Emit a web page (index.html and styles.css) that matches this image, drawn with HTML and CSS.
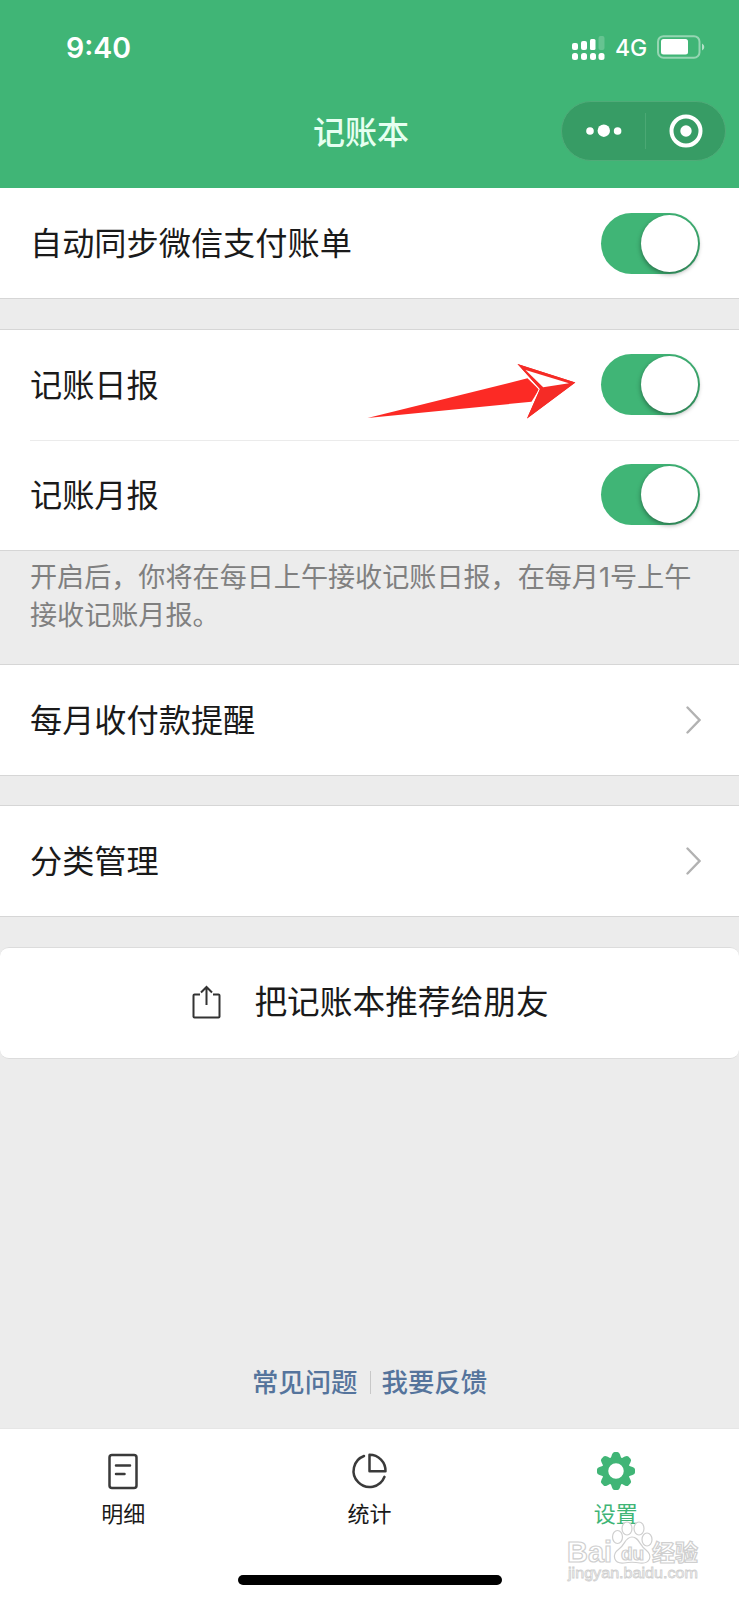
FILE: index.html
```html
<!DOCTYPE html>
<html lang="zh-CN">
<head>
    <meta charset="UTF-8">
    <meta name="viewport" content="width=device-width, initial-scale=1.0">
    <title>记账本</title>
    <link rel="stylesheet" href="styles.css">
</head>
<body>
    <!-- Header -->
    <header class="header">
        <div class="status-bar">
            <span class="time">9:40</span>
            <div class="status-right">
                <svg class="signal" width="33" height="25" viewBox="0 0 33 25" fill="#fff">
                    <rect x="0" y="7" width="6" height="7" rx="2"/>
                    <rect x="9" y="5" width="6" height="9" rx="2"/>
                    <rect x="18" y="3" width="5.500" height="11" rx="1.500"/>
                    <rect x="26.500" y="0" width="6" height="14" rx="2" opacity="0.2"/>
                    <rect x="0" y="17" width="6" height="7" rx="2.500"/>
                    <rect x="9" y="17" width="6" height="7" rx="2.500"/>
                    <rect x="18" y="17" width="6" height="7" rx="2.500"/>
                    <rect x="26.500" y="17" width="6" height="7" rx="2.500"/>
                </svg>
                <span class="network">4G</span>
                <svg class="battery" width="48" height="24" viewBox="0 0 48 24">
                    <rect x="1" y="1.200" width="41.500" height="21.500" rx="5.500" fill="none" stroke="#fff" stroke-opacity="0.45" stroke-width="2"/>
                    <rect x="4" y="4" width="27" height="15.500" rx="2.500" fill="#fff"/>
                    <path d="M45 8.500q2.300 1 2.300 3.500t-2.300 3.500z" fill="#fff" fill-opacity="0.6"/>
                </svg>
            </div>
        </div>
        <div class="nav">
            <h1>记账本</h1>
            <div class="capsule">
                <svg width="36" height="14" viewBox="0 0 36 14" fill="#fff">
                    <circle cx="4" cy="7" r="3.800"/>
                    <circle cx="17.800" cy="6.700" r="6.200"/>
                    <circle cx="31.600" cy="7" r="3.800"/>
                </svg>
                <span class="capsule-line"></span>
                <svg width="34" height="34" viewBox="0 0 34 34">
                    <circle cx="17" cy="17" r="14.500" fill="none" stroke="#fff" stroke-width="4"/>
                    <circle cx="17" cy="17" r="5.700" fill="#fff"/>
                </svg>
            </div>
        </div>
    </header>

    <!-- Settings list -->
    <main class="content">
        <section class="group first">
            <div class="row">
                <span>自动同步微信支付账单</span>
                <span class="switch"></span>
            </div>
        </section>

        <section class="group reports">
            <div class="row">
                <span>记账日报</span>
                <svg class="arrow" width="210" height="58" viewBox="0 0 210 58">
                    <path d="M0.500 55L160.500 15.300L172 26.500L164.500 38.800z" fill="#fc2a25"/>
                    <path d="M150.500 1L208.300 19.400L160 55.500L173 26z" fill="#f52b26" stroke="#fff" stroke-width="2.200" paint-order="stroke"/>
                    <path d="M150.500 1L208.300 19.400L160 55.500L173 26z" fill="#f52b26"/>
                    <path d="M158.500 7L202 20.200L176.200 24.300z" fill="#fff"/>
                </svg>
                <span class="switch"></span>
            </div>
            <div class="row divided">
                <span>记账月报</span>
                <span class="switch"></span>
            </div>
        </section>
        <p class="hint">开启后，你将在每日上午接收记账日报，在每月1号上午<br>接收记账月报。</p>

        <section class="group reminder">
            <div class="row">
                <span>每月收付款提醒</span>
                <svg class="chevron" width="15" height="28" viewBox="0 0 15 28">
                    <path d="M1.500 1.500L13.500 14L1.500 26.500"/>
                </svg>
            </div>
        </section>

        <section class="group">
            <div class="row">
                <span>分类管理</span>
                <svg class="chevron" width="15" height="28" viewBox="0 0 15 28">
                    <path d="M1.500 1.500L13.500 14L1.500 26.500"/>
                </svg>
            </div>
        </section>

        <button class="share">
            <svg width="29" height="34" viewBox="0 0 29 34" fill="none" stroke="#333" stroke-width="2">
                <path d="M8 9.500H2.500Q1.500 9.500 1.500 10.500V31.500Q1.500 32.500 2.500 32.500H26.500Q27.500 32.500 27.500 31.500V10.500Q27.500 9.500 26.500 9.500H21"/>
                <path d="M14.500 20V2M9 7.500L14.500 2L20 7.500"/>
            </svg>
            <span>把记账本推荐给朋友</span>
        </button>

        <div class="links">
            <a href="#">常见问题</a>
            <a href="#">我要反馈</a>
        </div>
    </main>

    <!-- Tab bar -->
    <nav class="tabs">
        <a class="tab" href="#">
            <svg width="40" height="40" viewBox="0 0 40 40" fill="none" stroke="#3a3a3a" stroke-width="2.500" stroke-linecap="round">
                <rect x="6.500" y="4" width="27" height="33" rx="2.500"/>
                <path d="M13 14.500H27M13 23H21.500"/>
            </svg>
            <span>明细</span>
        </a>
        <a class="tab" href="#">
            <svg width="40" height="40" viewBox="0 0 40 40" fill="none" stroke="#3a3a3a" stroke-width="2.500" stroke-linecap="round" stroke-linejoin="round">
                <path d="M15 5A16 16 0 1 0 35.500 25.800"/>
                <path d="M20.500 3.800V20.300H36.500A16 16 0 0 0 20.500 3.800z"/>
            </svg>
            <span>统计</span>
        </a>
        <a class="tab active" href="#">
            <svg width="40" height="40" viewBox="0 0 40 40">
                <circle cx="20" cy="20" r="11" fill="none" stroke="#40b576" stroke-width="6.500"/>
                <g fill="#40b576">
                    <path id="teeth" d="M14.500 8L16 3.500Q16.800 1 18.500 1H21.500Q23.200 1 24 3.500L25.500 8zM14.500 32L16 36.500Q16.800 39 18.500 39H21.500Q23.200 39 24 36.500L25.500 32z"/>
                    <use href="#teeth" transform="rotate(45 20 20)"/>
                    <use href="#teeth" transform="rotate(90 20 20)"/>
                    <use href="#teeth" transform="rotate(135 20 20)"/>
                </g>
            </svg>
            <span>设置</span>
        </a>
    </nav>
    <div class="home-indicator"></div>

    <!-- Watermark -->
    <svg class="watermark" width="140" height="66" viewBox="0 0 140 66">
        <g fill="#fff" stroke="#cfcfcf" stroke-width="1.200">
            <text class="wm-latin" x="1" y="42" textLength="45" lengthAdjust="spacingAndGlyphs">Bai</text>
            <ellipse cx="61" cy="8.500" rx="5" ry="6.500"/>
            <ellipse cx="73" cy="8.500" rx="5" ry="6.500"/>
            <ellipse cx="51.500" cy="17" rx="5" ry="6.500"/>
            <ellipse cx="81" cy="19.500" rx="5" ry="6.500"/>
            <path d="M66 17C59 17 59 25 53 29C45 35 48 44 58 43Q66 41.500 74 43C84 44 87 36 80 30C73 25 73 17 66 17z"/>
            <text class="wm-du" x="55" y="40">du</text>
            <text class="wm-cn" x="86" y="41">经验</text>
            <text class="wm-url" x="2" y="58" textLength="130" lengthAdjust="spacingAndGlyphs">jingyan.baidu.com</text>
        </g>
    </svg>
</body>
</html>
```
FILE: styles.css
```css
* {
    box-sizing: border-box;
}
body {
    margin: 0;
    height: 1600px;
    position: relative;
    display: flex;
    flex-direction: column;
    overflow: hidden;
    font-family: Inter, "Noto Sans CJK SC", sans-serif;
    color: #1a1a1a;
    background-color: #ececec;
}
a {
    text-decoration: none;
}
svg {
    display: block;
    flex-shrink: 0;
}

/* Header */
.header {
    height: 188px;
    background-color: #40b576;
    color: #fff;
}
.status-bar {
    height: 94px;
    display: flex;
    align-items: center;
    justify-content: space-between;
    padding: 0 34px 0 66px;
}
.time {
    padding-top: 1px;
    font-size: 28.5px;
    font-weight: 600;
    line-height: 40px;
}
.status-right {
    display: flex;
    align-items: center;
}
.signal {
    margin-top: 2px;
}
.network {
    margin: 1px 10px 0 10px;
    width: 32px;
    font-size: 23px;
    font-weight: 500;
    line-height: 30px;
}
.nav {
    height: 73px;
    display: flex;
    align-items: center;
    justify-content: space-between;
    padding: 0 13px 0 313px;
}
.nav h1 {
    margin: 0;
    padding-top: 4px;
    font-size: 32px;
    font-weight: 500;
    line-height: 44px;
    color: #e6fff0;
}
.capsule {
    width: 165px;
    height: 60px;
    display: flex;
    align-items: center;
    justify-content: space-between;
    padding: 0 22px 0 24px;
    border: 1px solid #4fab78;
    border-radius: 30px;
    background-color: #379c65;
}
.capsule-line {
    width: 1px;
    height: 36px;
    background-color: #4ba874;
}

/* Settings list */
.content {
    flex: 1;
    display: flex;
    flex-direction: column;
}
.group {
    margin-bottom: 30px;
    background-color: #fff;
    border-top: 1px solid #d6d6d6;
    border-bottom: 1px solid #d6d6d6;
}
.group.first {
    border-top: none;
}
.group.reminder {
    margin-bottom: 29px;
}
.row {
    position: relative;
    height: 110px;
    display: flex;
    align-items: center;
    justify-content: space-between;
    padding: 0 39px 0 30px;
    font-size: 32.2px;
    line-height: 46px;
}
.row > span:first-child {
    padding-top: 2px;
}
.reports .row {
    padding-bottom: 1px;
}
.row.divided::before {
    content: "";
    position: absolute;
    top: 0;
    left: 30px;
    right: 0;
    height: 1px;
    background-color: #ebebeb;
}
.switch {
    width: 99px;
    height: 61px;
    display: flex;
    justify-content: flex-end;
    padding: 2px;
    border-radius: 31px;
    background-color: #40b576;
}
.switch::after {
    content: "";
    width: 57px;
    height: 57px;
    border-radius: 50%;
    background-color: #fff;
    box-shadow: 0 2px 5px rgba(0, 0, 0, 0.4);
}
.chevron {
    margin-right: -1px;
    fill: none;
    stroke: #b2b2b2;
    stroke-width: 2.4;
    stroke-linecap: round;
}
/* Pointer lying over the daily report row */
.arrow {
    position: absolute;
    left: 367px;
    top: 33px;
}
.hint {
    height: 113px;
    margin: -30px 0 0;
    padding: 8px 30px 0;
    font-size: 27.1px;
    line-height: 38px;
    color: #808080;
    white-space: nowrap;
}
.share {
    height: 112px;
    display: flex;
    align-items: center;
    justify-content: center;
    gap: 33px;
    padding: 0 0 2px 2px;
    border: 1px solid #dcdcdc;
    border-left: none;
    border-right: none;
    border-radius: 9px;
    background-color: #fff;
    font-family: inherit;
    font-size: 32.7px;
    line-height: 46px;
    color: #1a1a1a;
}
.links {
    margin-top: auto;
    padding-bottom: 26px;
    display: flex;
    justify-content: center;
    font-size: 26.4px;
    font-weight: 500;
    line-height: 40px;
}
.links a {
    padding: 0 12px;
    color: #55749c;
}
.links a + a {
    background: linear-gradient(#c8c8c8, #c8c8c8) left center / 1px 23px no-repeat;
}

/* Tab bar */
.tabs {
    height: 172px;
    display: flex;
    background-color: #fff;
    border-top: 1px solid #e6e6e6;
}
.tab {
    flex: 1;
    display: flex;
    flex-direction: column;
    align-items: center;
    gap: 7px;
    padding-top: 22px;
    font-size: 22px;
    line-height: 32px;
    color: #1a1a1a;
}
.tab.active {
    color: #40b576;
}
.home-indicator {
    position: absolute;
    left: 238px;
    bottom: 15px;
    width: 264px;
    height: 10px;
    border-radius: 5px;
    background-color: #000;
}

/* Watermark */
.watermark {
    position: absolute;
    left: 566px;
    top: 1520px;
}
.wm-latin {
    font: bold 30px "Liberation Sans", sans-serif;
}
.wm-du {
    font: bold 19px "Liberation Sans", sans-serif;
}
.wm-cn {
    font: bold 23px "Noto Sans CJK SC", sans-serif;
}
.wm-url {
    font: 15px "Liberation Sans", sans-serif;
    stroke-width: 0.8px;
}
```
